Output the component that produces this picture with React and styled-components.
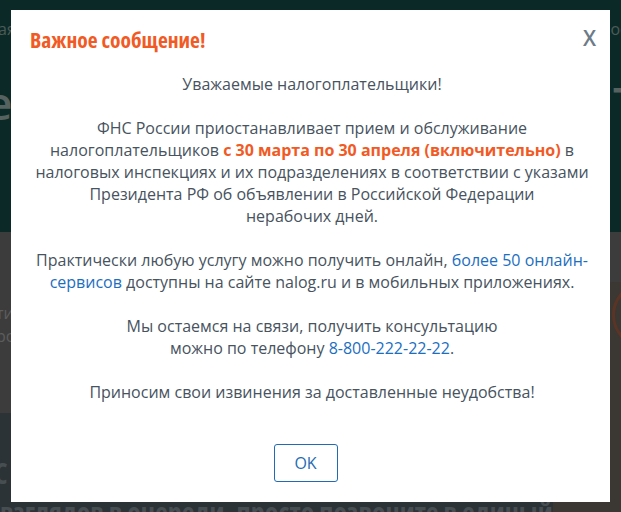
import React from "react";
import styled, { createGlobalStyle } from "styled-components";

const GlobalStyle = createGlobalStyle`
  html, body {
    margin: 0;
    padding: 0;
  }
  body {
    background: #3c3c3c;
    font-family: "Open Sans", "Liberation Sans", sans-serif;
    overflow: hidden;
  }
`;

/* dimmed page behind the modal */
const Page = styled.div`
  width: 621px;
  height: 512px;
  overflow: hidden;
  display: flex;
  flex-direction: column;
`;

const Hero = styled.header`
  height: 232px;
  flex-shrink: 0;
  background: #0b2a27;
  display: flex;
  flex-direction: column;
  padding-top: 18px;
  box-sizing: border-box;
`;

const HeroRow = styled.div`
  display: flex;
  justify-content: space-between;
  align-items: center;
  height: ${(p) => p.$h}px;
  margin-top: ${(p) => p.$mt || 0}px;
  color: ${(p) => p.$color};
  font-size: ${(p) => p.$size}px;
  font-weight: ${(p) => p.$weight || 400};
  line-height: 1;
`;

const Clip = styled.span`
  margin-left: ${(p) => p.$ml || 0}px;
  margin-right: ${(p) => p.$mr || 0}px;
`;

const Lower = styled.div`
  flex: 1;
  display: flex;
`;

const LeftCol = styled.div`
  width: 553px;
  display: flex;
  flex-direction: column;
`;

const GraySection = styled.div`
  height: 181px;
  background: #3c3c3c;
  color: #5d5d5d;
  font-size: 16px;
  line-height: 23px;
  padding-top: 70px;
  box-sizing: border-box;
`;

const SlateSection = styled.div`
  flex: 1;
  background: #2b3337;
  color: #474e52;
  font-weight: 700;
  font-stretch: 75%;
  padding-top: 44px;
  box-sizing: border-box;
`;

const BigLetter = styled.div`
  font-size: 28px;
  line-height: 32px;
  margin-left: -6px;
`;

const SlateLine = styled.div`
  font-size: 28px;
  line-height: 28px;
  margin-top: 9px;
  white-space: nowrap;
`;

const RightCol = styled.div`
  flex: 1;
  display: flex;
  flex-direction: column;
`;

const RightCard = styled.div`
  margin-top: 50px;
  flex: 1;
  background: #3b3733;
  padding: 0 0 0 59px;
  overflow: hidden;
`;

const Ring = styled.div`
  width: 60px;
  height: 60px;
  border: 3px solid #5a3526;
  border-radius: 50%;
`;

/* modal */
const Overlay = styled.div`
  position: fixed;
  inset: 0;
  display: flex;
  align-items: center;
  justify-content: center;
`;

const Modal = styled.div`
  width: 599px;
  background: #fff;
  box-sizing: border-box;
  padding: 17px 13px 20px 19px;
  display: flex;
  flex-direction: column;
`;

const Head = styled.div`
  display: flex;
  justify-content: space-between;
  align-items: flex-start;
`;

const Title = styled.h2`
  margin: 0;
  font-family: "Open Sans", sans-serif;
  font-stretch: 75%;
  font-weight: 700;
  font-size: 21.5px;
  line-height: 26px;
  color: #f15a24;
`;

const Close = styled.button`
  border: none;
  background: none;
  padding: 0;
  margin: -2px 1px 0 0;
  font-family: "Open Sans", sans-serif;
  font-weight: 600;
  font-size: 21px;
  line-height: 26px;
  color: #6d7b88;
  cursor: pointer;
`;

const Body = styled.div`
  margin-top: 20px;
  padding: 0 3px 0 0;
  text-align: center;
  color: #47535e;
  font-size: 16px;
  line-height: 22px;
`;

const Para = styled.p`
  margin: 0 0 22px;
  &:last-child {
    margin-bottom: 0;
  }
`;

const Accent = styled.b`
  color: #f15a24;
  font-weight: 700;
`;

const Link = styled.a`
  color: #1c6ebf;
  text-decoration: none;
`;

const Footer = styled.div`
  display: flex;
  justify-content: center;
  margin-top: 41px;
  padding-right: 16px;
`;

const OkButton = styled.button`
  width: 64px;
  height: 38px;
  border: 1px solid #1f6cb4;
  border-radius: 3px;
  background: #fff;
  color: #1f6cb4;
  font-family: "Open Sans", sans-serif;
  font-size: 16px;
  cursor: pointer;
`;

export default function App() {
  return (
    <>
      <GlobalStyle />
      <Page>
        <Hero>
          <HeroRow $h={22} $color="#4c5b57" $size={16}>
            <Clip $ml={-2}>ая</Clip>
            <Clip $mr={-8}>ое</Clip>
          </HeroRow>
          <HeroRow $h={44} $mt={40} $color="#56625f" $size={46} $weight={600}>
            <Clip $ml={-14}>е</Clip>
            <Clip $mr={-18}>Т</Clip>
          </HeroRow>
        </Hero>
        <Lower>
          <LeftCol>
            <GraySection>
              <Clip $ml={-4}>ти</Clip>
              <br />
              <Clip $ml={-4}>рс</Clip>
            </GraySection>
            <SlateSection>
              <BigLetter>С</BigLetter>
              <SlateLine>взглядов в очереди, просто позвоните в единый</SlateLine>
            </SlateSection>
          </LeftCol>
          <RightCol>
            <RightCard>
              <Ring />
            </RightCard>
          </RightCol>
        </Lower>
      </Page>

      <Overlay>
        <Modal>
          <Head>
            <Title>Важное сообщение!</Title>
            <Close>X</Close>
          </Head>
          <Body>
            <Para>Уважаемые налогоплательщики!</Para>
            <Para>
              ФНС России приостанавливает прием и обслуживание
              <br />
              налогоплательщиков <Accent>с 30 марта по 30 апреля (включительно)</Accent> в
              <br />
              налоговых инспекциях и их подразделениях в соответствии с указами
              <br />
              Президента РФ об объявлении в Российской Федерации
              <br />
              нерабочих дней.
            </Para>
            <Para>
              Практически любую услугу можно получить онлайн, <Link href="#">более 50 онлайн-</Link>
              <br />
              <Link href="#">сервисов</Link> доступны на сайте nalog.ru и в мобильных приложениях.
            </Para>
            <Para>
              Мы остаемся на связи, получить консультацию
              <br />
              можно по телефону <Link href="#">8-800-222-22-22</Link>.
            </Para>
            <Para>Приносим свои извинения за доставленные неудобства!</Para>
          </Body>
          <Footer>
            <OkButton>OK</OkButton>
          </Footer>
        </Modal>
      </Overlay>
    </>
  );
}
